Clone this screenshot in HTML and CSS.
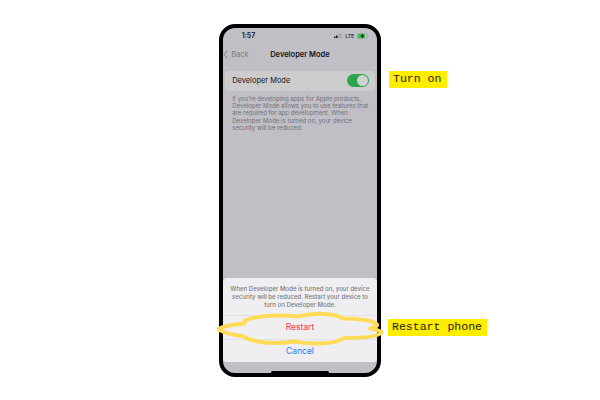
FILE: index.html
```
<!DOCTYPE html>
<html lang="en">
<head>
<meta charset="utf-8">
<title>Developer Mode</title>
<link rel="stylesheet" href="styles.css">
</head>
<body>
<main class="page">
  <section class="phone">
    <header class="status">
      <span class="time">1:57</span>
      <svg class="signal" viewBox="0 0 8 5"><path d="M0 3.4h1.5V5H0zM2 2.4h1.5V5H2z" fill="#151518"/><path d="M4.1 1.2h1.5V5H4.1zM6.2 0h1.500v5H6.200z" fill="#a2a2a8"/></svg>
      <span class="lte">LTE</span>
      <svg class="battery" viewBox="0 0 12 6"><rect x=".3" y=".3" width="10.2" height="5.4" rx="1.7" fill="#c3c2c8" stroke="#89998f" stroke-width=".5"/><rect x=".7" y=".7" width="7.4" height="4.6" rx="1.3" fill="#36c759"/><path d="M11.1 2v2q.7-1 0-2" fill="#999"/><path d="M6.1.5 3.1 3.3h2L4.6 5.6l3-3h-2z" fill="#07120a"/></svg>
    </header>
    <nav class="nav">
      <svg class="chevron" viewBox="0 0 5 9"><path d="M4.4.8.9 4.5l3.5 3.7" fill="none" stroke="#77777c" stroke-width="1"/></svg>
      <span class="back">Back</span>
      <h1>Developer Mode</h1>
    </nav>
    <div class="setting">
      <span>Developer Mode</span>
      <span class="toggle"></span>
    </div>
    <p class="hint">If you’re developing apps for Apple products,<br>Developer Mode allows you to use features that<br>are required for app development. When<br>Developer Mode is turned on, your device<br>security will be reduced.</p>
    <div class="sheet">
      <p class="message">When Developer Mode is turned on, your device<br>security will be reduced. Restart your device to<br>turn on Developer Mode.</p>
      <div class="action restart">Restart</div>
      <div class="action cancel">Cancel</div>
    </div>
    <div class="home"></div>
    <svg class="scribble" viewBox="0 0 170 36"><path d="M27.500 12.500V10C37 5 58 3 81 5.500C97 1.500 118 2 126 7.500C141 7.500 157 9.500 160 13.500Q161 15.500 153 17.500Q159 18 164.500 21C163 26 144 27 127 27C119 33 98 34 77 30.500C56 33.500 36 32 25.500 25C18 24 5 22 1.500 18C7 14.500 17 13.500 27.500 12.500" fill="none" stroke="#ffdb57" stroke-width="4" stroke-linejoin="round" stroke-linecap="round"/></svg>
  </section>
  <aside class="notes">
    <div class="note turn">Turn on</div>
    <div class="note again">Restart phone</div>
  </aside>
</main>
</body>
</html>
```
FILE: styles.css
```
* { box-sizing: border-box; }
body {
  margin: 0;
  background: #fff;
  font-family: Inter, "Liberation Sans", sans-serif;
}
h1, p { margin: 0; }
.page {
  display: flex;
  width: 600px;
  height: 400px;
  padding: 23.500px 0 0 218.700px;
}
.phone {
  position: relative;
  display: flex;
  flex-direction: column;
  width: 162.600px;
  height: 353px;
  border: 4px solid #000;
  border-radius: 16px;
  background: #c0bfc5;
  color: #151518;
}
.status {
  display: flex;
  align-items: center;
  height: 16.500px;
  padding: 0 8px 0 19px;
}
.time {
  font-size: 6.900px;
  font-weight: 600;
  width: 93px;
}
.signal { width: 8px; height: 5px; }
.lte {
  width: 9px;
  margin: 0 3px 0 3px;
  font-size: 5.400px;
  letter-spacing: -0.200px;
}
.battery { width: 12px; height: 6px; }
.nav {
  display: flex;
  align-items: center;
  height: 20.500px;
}
.chevron { width: 5px; height: 9px; }
.back {
  width: 42.500px;
  padding-left: 3.500px;
  color: #7b7b80;
  font-size: 7.500px;
}
h1 {
  font-size: 7.500px;
  font-weight: 600;
  white-space: nowrap;
}
.setting {
  display: flex;
  align-items: center;
  justify-content: space-between;
  height: 20.500px;
  margin: 6px 2.500px 0;
  padding: 0 6px 0 7px;
  border-radius: 4px;
  background: #cccccc;
  font-size: 7.450px;
}
.toggle {
  width: 22px;
  height: 13px;
  padding: 0.800px;
  border-radius: 7px;
  background: #2ba44a;
}
.toggle::after {
  content: "";
  display: block;
  width: 11.400px;
  height: 11.400px;
  margin-left: auto;
  border-radius: 50%;
  background: #d0d0d0;
}
.hint {
  padding: 3.500px 0 0 9.500px;
  color: #737278;
  font-size: 6.060px;
  line-height: 7.400px;
  white-space: nowrap;
}
.sheet {
  height: 84px;
  margin: auto 0 10.300px;
  border-radius: 4px;
  background: #efeff2;
  text-align: center;
}
.message {
  height: 36.500px;
  padding-top: 6.300px;
  color: #7b7b7f;
  font-size: 6.050px;
  font-weight: 500;
  line-height: 8.200px;
  white-space: nowrap;
}
.action {
  height: 23.800px;
  border-top: 1px solid #e2e2e6;
  font-size: 8.500px;
  line-height: 23px;
}
.restart { color: #f8383c; }
.cancel { color: #147df2; }
.home {
  position: absolute;
  bottom: -1px;
  left: 48px;
  width: 58.500px;
  height: 3px;
  border-radius: 1.500px;
  background: #000;
}
.scribble {
  position: absolute;
  left: -6px;
  top: 283px;
  width: 170px;
  height: 36px;
}
.notes {
  display: flex;
  flex-direction: column;
  align-items: flex-start;
  padding: 47.500px 0 0 6.700px;
}
.note {
  height: 17px;
  padding-left: 4px;
  background: #ffed00;
  color: #252200;
  font-family: "Liberation Mono", monospace;
  font-size: 11.550px;
  line-height: 16.400px;
  white-space: nowrap;
}
.turn { width: 58px; margin-left: 1px; }
.again { width: 99px; margin-top: 231px; }
```
